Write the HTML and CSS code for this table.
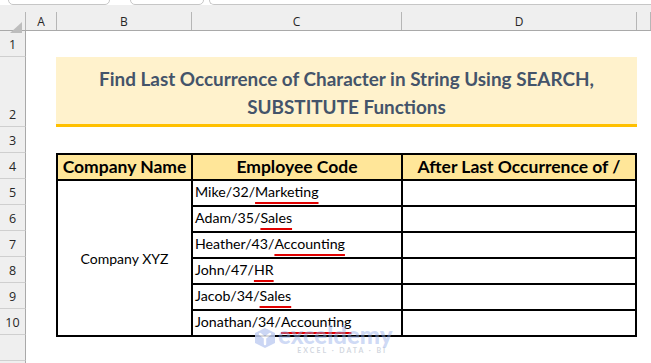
FILE: index.html
```html
<!DOCTYPE html>
<html lang="en">
<head>
<meta charset="utf-8">
<title>Find Last Occurrence of Character</title>
<link rel="stylesheet" href="styles.css">
</head>
<body>
<div class="tabs">
  <span class="tab t1"></span>
  <span class="tab t2"></span>
  <span class="tab t3"></span>
</div>
<div class="sheet">
  <div class="corner"><span class="tri"></span></div>
  <div class="colh"><span class="lab">A</span></div>
  <div class="colh"><span class="lab">B</span></div>
  <div class="colh"><span class="lab">C</span></div>
  <div class="colh"><span class="lab">D</span></div>
  <div class="colh"><span class="lab"></span></div>

  <div class="rowh">1</div>
  <div class="rowh">2</div>
  <div class="rowh">3</div>
  <div class="rowh">4</div>
  <div class="rowh">5</div>
  <div class="rowh">6</div>
  <div class="rowh">7</div>
  <div class="rowh">8</div>
  <div class="rowh">9</div>
  <div class="rowh">10</div>
  <div class="rowh"></div>
  <div class="rowh rest"></div>

  <div class="title">Find Last Occurrence of Character in String Using SEARCH,<br>SUBSTITUTE Functions</div>

  <div class="tbl">
    <div class="th">Company Name</div>
    <div class="th">Employee Code</div>
    <div class="th">After Last Occurrence of /</div>
    <div class="company">Company XYZ</div>
    <div class="td">Mike/32/<span class="mk">Marketing</span></div>
    <div class="td"></div>
    <div class="td">Adam/35/<span class="mk">Sales</span></div>
    <div class="td"></div>
    <div class="td">Heather/43/<span class="mk">Accounting</span></div>
    <div class="td"></div>
    <div class="td">John/47/<span class="mk">HR</span></div>
    <div class="td"></div>
    <div class="td">Jacob/34/<span class="mk">Sales</span></div>
    <div class="td"></div>
    <div class="td">Jonathan/34/<span class="mk">Accounting</span></div>
    <div class="td"></div>
  </div>

  <div class="wm">
    <svg class="wm-icon" width="24" height="22" viewBox="0 0 24 22">
      <path d="M12 1 L22 6 L22 16 L12 21 L2 16 L2 6 Z" fill="#c3d0f3"/>
      <path d="M7 7 L12 11 L17 7 M12 11 L12 17" stroke="#ffffff" stroke-width="2.4" fill="none" stroke-linecap="round"/>
    </svg>
    <div class="wm-text">
      <span class="wm-name">exceldemy</span>
      <span class="wm-tag">EXCEL · DATA · BI</span>
    </div>
  </div>
</div>
</body>
</html>
```

FILE: styles.css
```css
html, body {
  margin: 0;
  padding: 0;
}
body {
  width: 651px;
  height: 363px;
  overflow: hidden;
  background: #ffffff;
  font-family: Lato, "Liberation Sans", sans-serif;
}

.tabs {
  height: 5px;
  overflow: hidden;
  display: flex;
  align-items: flex-end;
  padding-left: 8px;
  background: #ffffff;
}
.tab {
  height: 12px;
  border: 1px solid #c6c6c6;
  border-radius: 5px;
  background: #ffffff;
  box-sizing: border-box;
  flex: none;
}
.t1 { width: 102px; }
.t2 { width: 74px; margin-left: 20px; }
.t3 { flex: 1; margin-left: 5px; border-right: none; border-radius: 5px 0 0 5px; }

.sheet {
  position: relative;
  display: grid;
  grid-template-columns: 26px 31px 135px 210px 235px 1fr;
  grid-template-rows: 26px 26px 70px 26px 26px repeat(6, 26px) 26px 1fr;
  height: 358px;
}

.corner, .colh {
  grid-row: 1;
  background: #efefef;
  border-bottom: 1px solid #a9a9a9;
  padding-top: 7px;
  box-sizing: border-box;
  display: flex;
}
.corner {
  position: relative;
}
.corner::after {
  content: "";
  position: absolute;
  right: 0;
  top: 7px;
  bottom: 0;
  border-right: 1px solid #b6b6b6;
}
.tri {
  position: absolute;
  left: 10px;
  top: 17px;
  width: 0;
  height: 0;
  border-left: 12px solid transparent;
  border-bottom: 11px solid #bdbdbd;
}
.lab {
  flex: 1;
  display: flex;
  align-items: center;
  justify-content: center;
  border-right: 1px solid #b6b6b6;
  font-family: "Open Sans", "Noto Sans", sans-serif;
  font-size: 12px;
  color: #262626;
  padding-top: 1px;
}

.rowh {
  grid-column: 1;
  background: #efefef;
  border-right: 1px solid #a9a9a9;
  border-bottom: 1px solid #cfcfcf;
  box-sizing: border-box;
  display: flex;
  align-items: flex-end;
  justify-content: center;
  padding-bottom: 3px;
  font-family: "Open Sans", "Noto Sans", sans-serif;
  font-size: 12.5px;
  line-height: 16px;
  color: #262626;
}
.rowh.rest {
  border-bottom: none;
}

.title {
  grid-column: 3 / 6;
  grid-row: 3;
  margin-left: -1px;
  background: #fff2cc;
  border-bottom: 3px solid #ffc000;
  box-sizing: border-box;
  display: flex;
  align-items: center;
  justify-content: center;
  text-align: center;
  padding-top: 5px;
  font-weight: 700;
  font-size: 18.9px;
  line-height: 28px;
  color: #44546a;
}

.tbl {
  grid-column: 3 / 6;
  grid-row: 5 / 12;
  margin-left: -1px;
  align-self: start;
  display: grid;
  grid-template-columns: 133px 208px 1fr;
  grid-template-rows: repeat(7, 24px);
  gap: 2px;
  padding: 2px;
  background: #000000;
}
.th {
  background: #ffe699;
  display: flex;
  align-items: flex-end;
  justify-content: center;
  padding-bottom: 2px;
  box-sizing: border-box;
  font-weight: 700;
  font-size: 17.5px;
  line-height: 20px;
  color: #000000;
}
.company {
  grid-row: 2 / 8;
  background: #ffffff;
  display: flex;
  align-items: center;
  justify-content: center;
  font-size: 14px;
  color: #000000;
}
.td {
  background: #ffffff;
  display: flex;
  align-items: flex-end;
  padding: 0 0 4px 2px;
  box-sizing: border-box;
  font-size: 14.2px;
  line-height: 18px;
  color: #000000;
  white-space: nowrap;
}
.mk {
  text-decoration: underline;
  text-decoration-color: #e00000;
  text-decoration-thickness: 2px;
  text-underline-offset: 5px;
  text-decoration-skip-ink: none;
}

.wm {
  position: absolute;
  left: 253px;
  top: 318px;
  display: flex;
  align-items: flex-start;
  gap: 1px;
  opacity: 0.85;
  pointer-events: none;
}
.wm-icon {
  margin-top: 4px;
}
.wm-text {
  display: flex;
  flex-direction: column;
  align-items: center;
}
.wm-name {
  font-weight: 900;
  font-size: 24px;
  line-height: 23px;
  color: rgba(150, 175, 235, 0.55);
}
.wm-tag {
  font-weight: 700;
  font-size: 7px;
  line-height: 8px;
  letter-spacing: 2px;
  color: rgba(150, 160, 180, 0.5);
  margin-left: 14px;
}
```
